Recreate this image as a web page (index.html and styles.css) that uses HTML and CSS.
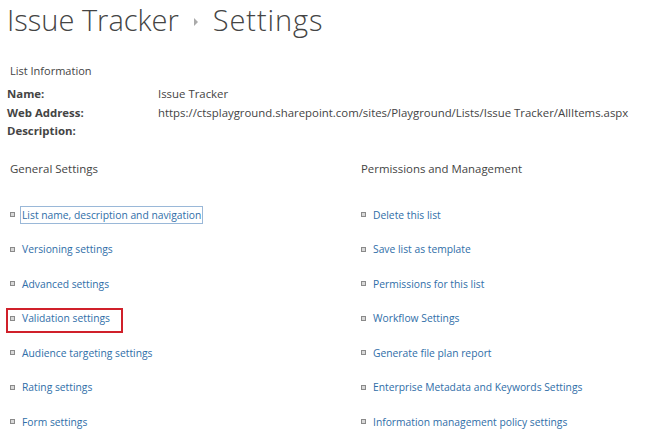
FILE: index.html
```html
<!DOCTYPE html>
<html>
<head>
<meta charset="utf-8">
<link rel="stylesheet" href="styles.css">
</head>
<body>
<div class="page">
  <h1 class="title"><span>Issue Tracker</span><span class="crumb"></span><span class="current">Settings</span></h1>
  <section class="info">
    <div class="info-head">List Information</div>
    <div class="info-grid">
      <div class="label">Name:</div><div class="value">Issue Tracker</div>
      <div class="label">Web Address:</div><div class="value">https://ctsplayground.sharepoint.com/sites/Playground/Lists/Issue Tracker/AllItems.aspx</div>
      <div class="label">Description:</div><div class="value"></div>
    </div>
  </section>
  <div class="columns">
    <div class="col col-left">
      <div class="col-head">General Settings</div>
      <ul class="links">
        <li><span class="bullet"></span><a class="focused">List name, description and navigation</a></li>
        <li><span class="bullet"></span><a>Versioning settings</a></li>
        <li><span class="bullet"></span><a>Advanced settings</a></li>
        <li class="marked"><span class="bullet"></span><a>Validation settings</a></li>
        <li><span class="bullet"></span><a>Audience targeting settings</a></li>
        <li><span class="bullet"></span><a>Rating settings</a></li>
        <li><span class="bullet"></span><a>Form settings</a></li>
      </ul>
    </div>
    <div class="col col-right">
      <div class="col-head">Permissions and Management</div>
      <ul class="links">
        <li><span class="bullet"></span><a>Delete this list</a></li>
        <li><span class="bullet"></span><a>Save list as template</a></li>
        <li><span class="bullet"></span><a>Permissions for this list</a></li>
        <li><span class="bullet"></span><a>Workflow Settings</a></li>
        <li><span class="bullet"></span><a>Generate file plan report</a></li>
        <li><span class="bullet"></span><a>Enterprise Metadata and Keywords Settings</a></li>
        <li><span class="bullet"></span><a>Information management policy settings</a></li>
      </ul>
    </div>
  </div>
</div>
</body>
</html>
```
FILE: styles.css
```css
* { box-sizing: border-box; }
html, body { margin: 0; padding: 0; background: #fff; }
body { font-family: "Open Sans", "Noto Sans", sans-serif; color: #444; overflow: hidden; }
.page { width: 650px; height: 445px; padding: 0 0 0 7px; }
.title {
  margin: 0;
  padding-top: 0;
  font-weight: 300;
  font-size: 29px;
  line-height: 40px;
  color: #444;
  display: flex;
  align-items: center;
}
.current { letter-spacing: 0.9px; }
.crumb {
  display: inline-block;
  width: 0; height: 0;
  border-top: 4px solid transparent;
  border-bottom: 4px solid transparent;
  border-left: 4px solid #aaa;
  margin: 4px 15px 0 15px;
}
.info { margin-top: 22px; }
.info-head { font-size: 11px; line-height: 18px; padding-left: 3px; color: #444; }
.info-grid {
  display: grid;
  grid-template-columns: 151px 1fr;
  font-size: 11.4px;
  line-height: 18.5px;
  margin-top: 5px;
}
.label { font-weight: 700; color: #444; }
.value { color: #444; white-space: nowrap; }
.columns { display: flex; margin-top: 19px; }
.col { display: flex; flex-direction: column; }
.col-left { width: 354px; padding-left: 3px; }
.col-right { flex: 1; }
.col-head { font-size: 11.5px; line-height: 18px; color: #444; }
.col-right .col-head { font-size: 11.4px; }
.links { list-style: none; margin: 20px 0 0 0; padding: 0; }
.links li {
  display: flex;
  align-items: center;
  height: 34.5px;
  font-size: 10.3px;
  position: relative;
}
.bullet {
  width: 5px; height: 5px;
  border: 1px solid #8a8a8a;
  background: #d8d8d8;
  margin: 0 7px 0 0;
  flex: none;
}
.links a { color: #2f6ea8; text-decoration: none; white-space: nowrap; }
.focused {
  outline: 1px solid #9ab8d8;
  outline-offset: 1px;
}
.marked::before {
  content: "";
  position: absolute;
  left: -4px;
  top: 7px;
  width: 113px;
  height: 21px;
  border: 2px solid #d0202a;
}
```
